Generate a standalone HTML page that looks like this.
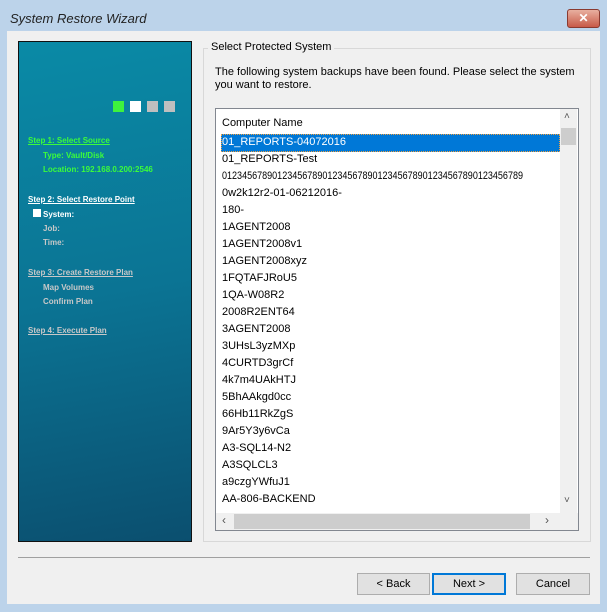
<!DOCTYPE html>
<html><head><style>
body{margin:0;width:607px;height:612px;background:#bcd3ea;font-family:"Liberation Sans",sans-serif;position:relative;overflow:hidden}
.a{position:absolute}
.client{left:7px;top:31px;width:593px;height:573px;background:#f0f0f0}
.title{left:10px;top:11px;font-size:13px;font-style:italic;color:#222}
.close{left:567px;top:9px;width:31px;height:17px;background:linear-gradient(#e8b0a0,#c85a48);border:1px solid #8a3a30;border-radius:3px;color:#fff;font-size:12px;font-weight:bold;text-align:center;line-height:17px}
.left{left:18px;top:41px;width:172px;height:499px;border:1px solid #111;background:linear-gradient(170deg,#0a8aa6 0%,#0b7494 50%,#0b4f6f 100%)}
.sq{width:11px;height:11px;top:101px}
.st{font-size:8px;font-weight:bold;color:#fff}
.u{text-decoration:underline}
.g{color:#3bfc3b}.gr{color:#c8c8c8}
.grp{left:203px;top:48px;width:386px;height:492px;border:1px solid #d8d8d8}
.list{left:215px;top:108px;width:362px;height:421px;border:1px solid #828790;background:#fff;overflow:hidden}
.row{position:absolute;left:6px;font-size:11px;color:#000;height:17px;line-height:17px;white-space:nowrap}
.btn{top:573px;height:20px;border:1px solid #adadad;background:#e1e1e1;font-size:11px;text-align:center;line-height:20px}
</style></head><body>
<div class="a title">System Restore Wizard</div>
<div class="a close">✕</div>
<div class="a client"></div>
<div class="a left"></div>
<div class="a sq" style="left:113px;background:#3ef23e"></div>
<div class="a sq" style="left:130px;background:#fff"></div>
<div class="a sq" style="left:147px;background:#bfbfbf"></div>
<div class="a sq" style="left:164px;background:#bfbfbf"></div>
<div class="a st g u" style="left:28px;top:136px">Step 1: Select Source</div>
<div class="a st g" style="left:43px;top:151px">Type: Vault/Disk</div>
<div class="a st g" style="left:43px;top:165px">Location: 192.168.0.200:2546</div>
<div class="a st u" style="left:28px;top:195px">Step 2: Select Restore Point</div>
<div class="a" style="left:33px;top:209px;width:8px;height:8px;background:#fff"></div>
<div class="a st" style="left:43px;top:210px">System:</div>
<div class="a st gr" style="left:43px;top:224px">Job:</div>
<div class="a st gr" style="left:43px;top:238px">Time:</div>
<div class="a st gr u" style="left:28px;top:268px">Step 3: Create Restore Plan</div>
<div class="a st gr" style="left:43px;top:283px">Map Volumes</div>
<div class="a st gr" style="left:43px;top:297px">Confirm Plan</div>
<div class="a st gr u" style="left:28px;top:326px">Step 4: Execute Plan</div>
<div class="a grp"></div>
<div class="a" style="left:208px;top:41px;background:#f0f0f0;padding:0 3px;font-size:11px">Select Protected System</div>
<div class="a" style="left:215px;top:66px;font-size:11px;line-height:13px;width:370px">The following system backups have been found. Please select the system you want to restore.</div>
<div class="a list">
<div class="row" style="top:6px">Computer Name</div>
<div class="a" style="left:5px;top:25px;width:337px;height:16px;background:#0078d7;border:1px dotted #f0a040"></div>
<div class="row" style="top:25px;color:#fff">01_REPORTS-04072016</div>
<div class="row" style="top:42px">01_REPORTS-Test</div>
<div class="row" style="top:59px;transform:scaleX(0.82);transform-origin:left">012345678901234567890123456789012345678901234567890123456789</div>
<div class="row" style="top:76px">0w2k12r2-01-06212016-</div>
<div class="row" style="top:93px">180-</div>
<div class="row" style="top:110px">1AGENT2008</div>
<div class="row" style="top:127px">1AGENT2008v1</div>
<div class="row" style="top:144px">1AGENT2008xyz</div>
<div class="row" style="top:161px">1FQTAFJRoU5</div>
<div class="row" style="top:178px">1QA-W08R2</div>
<div class="row" style="top:195px">2008R2ENT64</div>
<div class="row" style="top:212px">3AGENT2008</div>
<div class="row" style="top:229px">3UHsL3yzMXp</div>
<div class="row" style="top:246px">4CURTD3grCf</div>
<div class="row" style="top:263px">4k7m4UAkHTJ</div>
<div class="row" style="top:280px">5BhAAkgd0cc</div>
<div class="row" style="top:297px">66Hb11RkZgS</div>
<div class="row" style="top:314px">9Ar5Y3y6vCa</div>
<div class="row" style="top:331px">A3-SQL14-N2</div>
<div class="row" style="top:348px">A3SQLCL3</div>
<div class="row" style="top:365px">a9czgYWfuJ1</div>
<div class="row" style="top:382px">AA-806-BACKEND</div>
<div class="a" style="left:344px;top:0;width:17px;height:404px;background:#f0f0f0"></div>
<div class="a" style="left:348px;top:2px;font-size:10px;color:#555">˄</div>
<div class="a" style="left:345px;top:19px;width:15px;height:17px;background:#cdcdcd"></div>
<div class="a" style="left:348px;top:386px;font-size:10px;color:#555">˅</div>
<div class="a" style="left:0;top:404px;width:362px;height:17px;background:#f0f0f0"></div>
<div class="a" style="left:18px;top:405px;width:296px;height:15px;background:#cdcdcd"></div>
<div class="a" style="left:6px;top:404px;font-size:12px;color:#555">‹</div>
<div class="a" style="left:329px;top:404px;font-size:12px;color:#555">›</div>
</div>
<div class="a" style="left:18px;top:557px;width:572px;height:1px;background:#a0a0a0"></div>
<div class="a btn" style="left:357px;width:71px">&lt; Back</div>
<div class="a btn" style="left:432px;width:70px;border:2px solid #0078d7;height:18px;line-height:18px">Next &gt;</div>
<div class="a btn" style="left:516px;width:72px">Cancel</div>
</body></html>
